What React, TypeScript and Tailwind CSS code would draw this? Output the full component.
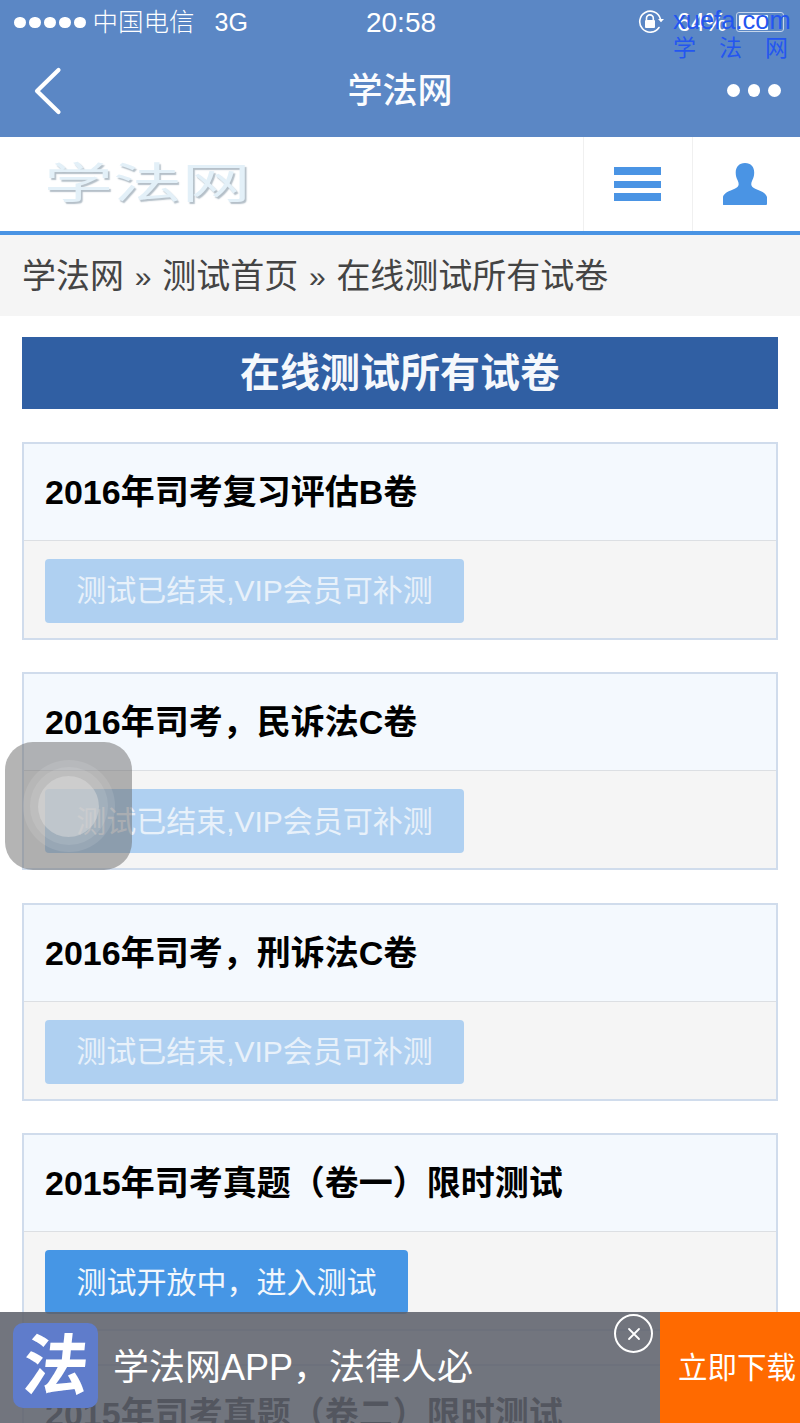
const FONT = "font-['Liberation_Sans','Noto_Sans_CJK_SC',sans-serif]";

const tests = [
  { title: "2016年司考复习评估B卷", open: false },
  { title: "2016年司考，民诉法C卷", open: false },
  { title: "2016年司考，刑诉法C卷", open: false },
  { title: "2015年司考真题（卷一）限时测试", open: true },
  { title: "2015年司考真题（卷二）限时测试", open: true },
];

function TestCard({ title, open }: { title: string; open: boolean }) {
  return (
    <div className="mb-[32.5px] border-2 border-[#d0dcec]">
      <div className="flex h-[97px] items-center border-b border-[#dcdfe3] bg-[#f4f9fe] pl-[21px]">
        <h3 className="text-[34px] leading-none font-bold text-black">{title}</h3>
      </div>
      <div className="flex h-[97px] items-center bg-[#f5f5f5] pt-[3px] pl-[21px]">
        {open ? (
          <button className="flex h-16 w-[363px] items-center justify-center rounded bg-[#4696e5] text-[30px] text-[#f2f7fc]">
            测试开放中，进入测试
          </button>
        ) : (
          <button className="flex h-16 w-[419px] items-center justify-center rounded bg-[#afd0f1] text-[30px] text-[#e8f1fa]">
            测试已结束,VIP会员可补测
          </button>
        )}
      </div>
    </div>
  );
}

function StatusBar() {
  return (
    <div className="relative flex h-[45px] items-center text-white">
      <div className="ml-[14px] flex gap-[3.5px]">
        {[0, 1, 2, 3, 4].map((i) => (
          <span key={i} className="size-[11.5px] rounded-full bg-white" />
        ))}
      </div>
      <span className="ml-[7px] text-[25.5px] font-light">中国电信</span>
      <span className="ml-[20px] text-[25px] font-light">3G</span>
      <span className="absolute left-[2px] right-0 text-center text-[28px]">20:58</span>
      <svg className="absolute left-[638px] top-[10px]" width="26" height="24" viewBox="0 0 26 24" fill="none">
        <path d="M21 17.5A10.5 10.5 0 1 1 22.4 9" stroke="#fff" strokeWidth="1.6" strokeLinecap="round" />
        <path d="M20 9h6l-3 3.2z" fill="#fff" />
        <path d="M8.500 10V8.300a3.400 3.400 0 0 1 6.800 0V10" stroke="#fff" strokeWidth="1.6" />
        <rect x="7" y="10" width="10" height="8" rx="1" fill="#fff" />
      </svg>
      <span className="absolute left-[677px] text-[25px] font-light">64%</span>
      <div className="absolute left-[736px] top-[12px] h-[20px] w-[48px] rounded-[3px] border border-[#c5d5ea] p-[1.5px]">
        <div className="h-full w-[29px] rounded-[1px] bg-white" />
      </div>
    </div>
  );
}

function NavBar() {
  return (
    <div className="relative flex h-[92px] items-center justify-center">
      <svg className="absolute left-[32px] top-[21px]" width="32" height="50" viewBox="0 0 32 50" fill="none">
        <path d="M26.500 4 5 25l21.500 21" stroke="#fff" strokeWidth="4.2" strokeLinecap="round" strokeLinejoin="round" />
      </svg>
      <span className="text-[35px] font-medium text-[#fbfcfe]">学法网</span>
      <div className="absolute left-[727px] top-[39px] flex gap-[8px]">
        {[0, 1, 2].map((i) => (
          <span key={i} className="size-[12.5px] rounded-full bg-white" />
        ))}
      </div>
    </div>
  );
}

function SiteHeader() {
  return (
    <div className="flex h-[98px] border-b-4 border-[#4a94e4] bg-white">
      <div className="flex flex-1 items-center pl-[44px]">
        <span className="origin-left scale-x-[1.64] text-[42px] leading-none font-normal text-[#e3f0f8] [text-shadow:1px_2px_1px_#b4bfc8]">
          学法网
        </span>
      </div>
      <div className="flex w-[109px] items-center justify-center border-l border-[#f0f0f0]">
        <div className="mr-[2px] flex w-[47px] flex-col gap-[5.5px]">
          <span className="h-[8px] bg-[#4a94e4]" />
          <span className="h-[7px] bg-[#4a94e4]" />
          <span className="h-[8px] bg-[#4a94e4]" />
        </div>
      </div>
      <div className="flex w-[108px] items-center justify-center border-l border-[#f0f0f0]">
        <svg width="44" height="42" viewBox="0 0 44 42" className="mr-[3px]">
          <path
            d="M22 0c6 0 9.200 4 9.200 9.500 0 3-.7 5.500-1.900 7.800-1 2-1.300 3.800-.8 5.200.6 1.700 2.600 2.800 6 4.200 4.500 1.800 8.500 3.600 9.500 7.300.3 1.300.4 3.200.4 6.500 0 1-.6 1.500-1.500 1.500H1c-.9 0-1.500-.5-1.500-1.500 0-3.300.1-5.200.4-6.500 1-3.700 5-5.500 9.500-7.300 3.400-1.400 5.400-2.500 6-4.200.5-1.400.2-3.200-.8-5.200-1.200-2.300-1.900-4.800-1.900-7.800C12.800 4 16 0 22 0z"
            fill="#4a94e4"
          />
        </svg>
      </div>
    </div>
  );
}

function AssistiveTouch() {
  return (
    <div className="absolute left-[5px] top-[742px] flex h-[128px] w-[127px] items-center justify-center rounded-[28px] bg-[#6a6a6a]/50">
      <div className="flex size-[92px] items-center justify-center rounded-full bg-white/10">
        <div className="flex size-[78px] items-center justify-center rounded-full bg-white/10">
          <div className="size-[61px] rounded-full bg-[#dcdcdc]/50" />
        </div>
      </div>
    </div>
  );
}

function AppBanner() {
  return (
    <div className="absolute bottom-0 left-0 right-0 flex h-[111px] bg-[#5e626c]/[.88]">
      <div className="relative flex flex-1 items-center">
        <div className="mb-[4px] ml-[13px] flex size-[85px] items-center justify-center rounded-[10px] bg-[#5f7ccb]">
          <span className="-skew-x-6 text-[66px] leading-none font-bold text-white">法</span>
        </div>
        <span className="ml-[15px] text-[36px] text-white">学法网APP，法律人必</span>
        <div className="absolute left-[614px] top-[2px] flex size-[39px] items-center justify-center rounded-full border-2 border-white">
          <svg width="14" height="14" viewBox="0 0 14 14" fill="none">
            <path d="M2 2l10 10M12 2 2 12" stroke="#fff" strokeWidth="1.800" strokeLinecap="round" />
          </svg>
        </div>
      </div>
      <div className="flex w-[140px] items-center justify-center bg-[#ff6a00] pt-[1px] pl-[14px] text-[29.5px] whitespace-nowrap text-white">
        立即下载
      </div>
    </div>
  );
}

export default function App() {
  return (
    <div className={`${FONT} relative h-[1423px] w-[800px] overflow-hidden bg-white`}>
      <div className="bg-[#5b87c5]">
        <StatusBar />
        <NavBar />
      </div>
      <SiteHeader />
      <div className="flex h-[81px] items-center bg-[#f5f5f5] pt-[1px] pl-[22px] text-[34px] text-[#444]">
        <span>学法网</span>
        <span className="mx-[10.75px] text-[30px]">»</span>
        <span>测试首页</span>
        <span className="mx-[10.75px] text-[30px]">»</span>
        <span>在线测试所有试卷</span>
      </div>
      <div className="px-[22px] pt-[21px]">
        <h2 className="mb-[32.75px] flex h-[72px] items-center justify-center bg-[#305fa3] text-[40px] font-bold text-[#f5f8fc]">
          在线测试所有试卷
        </h2>
        {tests.map((t) => (
          <TestCard key={t.title} title={t.title} open={t.open} />
        ))}
      </div>
      <AssistiveTouch />
      <AppBanner />
      <div className="absolute left-[673px] top-0 w-[120px] text-[#2456f0]">
        <div className="mt-[6px] text-[25.5px] leading-[28px] font-medium">xuefa.com</div>
        <div className="flex justify-between pr-[5px] text-[23px] leading-[28px]">
          <span>学</span>
          <span>法</span>
          <span>网</span>
        </div>
      </div>
    </div>
  );
}
